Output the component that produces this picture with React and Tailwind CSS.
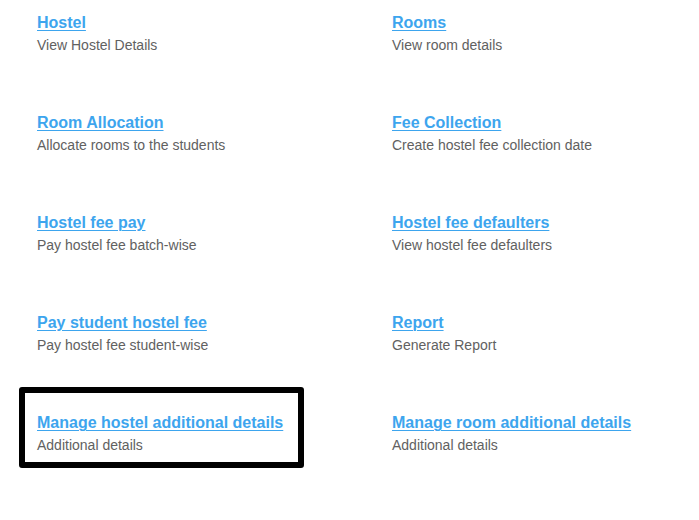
import React from "react";

const items = [
  ["Hostel", "View Hostel Details"],
  ["Rooms", "View room details"],
  ["Room Allocation", "Allocate rooms to the students"],
  ["Fee Collection", "Create hostel fee collection date"],
  ["Hostel fee pay", "Pay hostel fee batch-wise"],
  ["Hostel fee defaulters", "View hostel fee defaulters"],
  ["Pay student hostel fee", "Pay hostel fee student-wise"],
  ["Report", "Generate Report"],
  ["Manage hostel additional details", "Additional details"],
  ["Manage room additional details", "Additional details"],
];

export default function App() {
  return (
    <div className="w-[699px] h-[520px] bg-white overflow-hidden" style={{ fontFamily: '"Liberation Sans", Arial, sans-serif' }}>
      <div className="mt-[-13px] pl-[19px] grid grid-cols-[355px_1fr] gap-y-[19px]">
        {items.map(([t, d], i) => (
          <div key={i}>
            <div
              className={
                "w-fit border-[6px] rounded-[3px] pt-[19px] pb-[6px] pl-[12px] pr-[15px] " +
                (i === 8 ? "border-black" : "border-transparent")
              }
            >
              <a href="#" className="block text-[16px] leading-[22px] font-bold text-[#3da5ee] underline underline-offset-[2px] decoration-1 w-fit">
                {t}
              </a>
              <div className="text-[14px] leading-[22px] text-[#616161]">{d}</div>
            </div>
          </div>
        ))}
      </div>
    </div>
  );
}
